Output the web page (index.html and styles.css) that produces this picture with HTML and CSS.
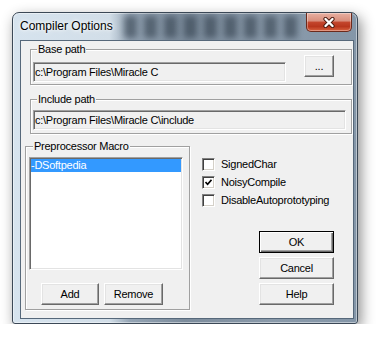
FILE: index.html
```html
<!DOCTYPE html>
<html lang="en">
<head>
  <meta charset="UTF-8" />
  <title>Compiler Options</title>
  <link rel="stylesheet" href="styles.css">
</head>
<body>
  <div class="window">
    <div class="titlebar">
      <div class="glass-blur"></div>
      <span class="title">Compiler Options</span>
      <button type="button" class="close">
        <svg width="12" height="11" viewBox="0 0 12 11">
          <path d="M2.5 2 L9.5 9 M9.5 2 L2.5 9" stroke="#4a1a10" stroke-width="4.2" stroke-linecap="round"/>
          <path d="M2.5 2 L9.5 9 M9.5 2 L2.5 9" stroke="#fff" stroke-width="2.4" stroke-linecap="round"/>
        </svg>
      </button>
    </div>

    <div class="client">
      <fieldset class="group group-base">
        <legend>Base path</legend>
        <div class="path-row">
          <input class="edit edit-base" type="text" value="c:\Program Files\Miracle C" readonly>
          <button type="button" class="btn btn-browse">...</button>
        </div>
      </fieldset>

      <fieldset class="group group-include">
        <legend>Include path</legend>
        <input class="edit edit-include" type="text" value="c:\Program Files\Miracle C\include" readonly>
      </fieldset>

      <div class="lower">
        <fieldset class="group group-macro">
          <legend>Preprocessor Macro</legend>
          <div class="listbox">
            <div class="list-item selected">-DSoftpedia</div>
          </div>
          <div class="macro-buttons">
            <button type="button" class="btn btn-add">Add</button>
            <button type="button" class="btn btn-remove">Remove</button>
          </div>
        </fieldset>

        <div class="side">
          <div class="checks">
            <label class="check"><span class="box"></span>SignedChar</label>
            <label class="check"><span class="box">
              <svg width="7" height="7" viewBox="0 0 7 7"><path d="M0.5 3 L2.6 5.3 L6.5 0.8" fill="none" stroke="#000" stroke-width="1.6"/></svg>
            </span>NoisyCompile</label>
            <label class="check"><span class="box"></span>DisableAutoprototyping</label>
          </div>
          <div class="dialog-buttons">
            <button type="button" class="btn btn-dialog btn-default">OK</button>
            <button type="button" class="btn btn-dialog">Cancel</button>
            <button type="button" class="btn btn-dialog">Help</button>
          </div>
        </div>
      </div>
    </div>
  </div>
</body>
</html>
```

FILE: styles.css
```css
body {
  margin: 0;
  background: #fff;
  font-family: "Liberation Sans", Arial, sans-serif;
}
.window {
  position: relative;
  box-sizing: border-box;
  width: 346px;
  height: 312px;
  margin: 12px 0 0 12px;
  padding: 0 3px 4px 7px;
  border: 1px solid #3b4856;
  border-radius: 7px 7px 3px 3px;
  overflow: hidden;
  background: linear-gradient(to right, #d6e3ee 0%, #d2dee8 28%, #94a4b4 34%, #7c8c9c 50%, #8a9aaa 75%, #8496a8 100%);
  box-shadow: inset 0 0 0 1px rgba(255,255,255,0.45), 3px 5px 14px rgba(0,0,0,0.45);
}
.titlebar {
  position: relative;
  display: flex;
  align-items: flex-start;
  height: 27px;
}
/* blurry reflection behind the glass */
.glass-blur {
  position: absolute;
  left: 104px;
  top: 3px;
  width: 176px;
  height: 22px;
  background: repeating-linear-gradient(90deg, #2a3744 0 13px, rgba(42,55,68,0) 13px 20px);
  opacity: 0.55;
  filter: blur(3px);
}
.title {
  position: relative;
  font-size: 12px;
  line-height: 27px;
  color: #000;
  text-shadow: 0 0 6px #fff, 0 0 3px #fff;
}
.close {
  position: relative;
  display: flex;
  align-items: center;
  justify-content: center;
  box-sizing: border-box;
  width: 46px;
  height: 19px;
  margin-left: auto;
  margin-right: 2px;
  padding: 0;
  border: 1px solid #6b2a1c;
  border-top: 0;
  border-radius: 0 0 5px 5px;
  background: linear-gradient(to bottom, #e8b0a2 0%, #d88d7b 45%, #c4472e 50%, #b8361d 75%, #d8623f 100%);
  box-shadow: inset 0 0 0 1px rgba(255,255,255,0.35);
}
.client {
  position: relative;
  box-sizing: border-box;
  height: 279px;
  border: 1px solid #56687a;
  background: #f0f0f0;
  font-size: 11px;
  letter-spacing: -0.25px;
  color: #000;
}
.group {
  box-sizing: border-box;
  min-width: 0;
  margin: 0;
  border: 1px solid #a0a0a0;
  box-shadow: inset 1px 1px 0 #fff, 1px 1px 0 #fff;
}
.group legend {
  margin-left: 4px;
  padding: 0 1px;
  line-height: 13px;
  background: #f0f0f0;
}
.group-base {
  width: 322px;
  margin: 2px 0 0 9px;
  padding: 0 2px 2px 2px;
}
.group-include {
  width: 322px;
  margin: 8px 0 0 9px;
  padding: 4px 2px 3px 2px;
}
.path-row {
  display: flex;
  align-items: flex-start;
  margin-top: -1px;
}
.edit {
  display: block;
  box-sizing: border-box;
  height: 20px;
  margin: 0;
  padding: 0 1px;
  font-family: inherit;
  font-size: 11px;
  letter-spacing: -0.25px;
  color: #000;
  background: #f0f0f0;
  border: 1px solid;
  border-color: #a0a0a0 #fff #fff #a0a0a0;
  box-shadow: inset 1px 1px 0 #696969, inset -1px -1px 0 #e3e3e3;
  outline: none;
}
.edit-base {
  width: 253px;
  margin-top: 7px;
}
.edit-include {
  width: 313px;
}
.btn {
  box-sizing: border-box;
  height: 22px;
  margin: 0;
  padding: 0;
  font-family: inherit;
  font-size: 11px;
  letter-spacing: -0.25px;
  color: #000;
  background: #f0f0f0;
  border: 1px solid;
  border-color: #fff #696969 #696969 #fff;
  box-shadow: inset -1px -1px 0 #a0a0a0, inset 1px 1px 0 #e3e3e3;
}
.btn-browse {
  width: 30px;
  margin-left: 18px;
}
.lower {
  display: flex;
  align-items: flex-start;
  margin: 6px 0 0 4px;
}
.group-macro {
  width: 165px;
  padding: 4px 3px 4px 3px;
}
.listbox {
  box-sizing: border-box;
  width: 154px;
  height: 113px;
  background: #fff;
  border: 1px solid;
  border-color: #a0a0a0 #fff #fff #a0a0a0;
  box-shadow: inset 1px 1px 0 #696969, inset -1px -1px 0 #e3e3e3;
  padding: 1px;
}
.list-item {
  height: 13px;
  line-height: 13px;
  white-space: nowrap;
}
.list-item.selected {
  background: #3399ff;
  color: #fff;
}
.macro-buttons {
  display: flex;
  gap: 5px;
  margin: 13px 0 0 12px;
}
.btn-add {
  width: 58px;
}
.btn-remove {
  width: 59px;
}
.side {
  display: flex;
  flex-direction: column;
  padding: 18px 0 0 12px;
}
.check {
  display: flex;
  align-items: flex-start;
  height: 18px;
  line-height: 13px;
  white-space: nowrap;
}
.box {
  display: flex;
  align-items: center;
  justify-content: center;
  box-sizing: border-box;
  width: 13px;
  height: 13px;
  margin-right: 6px;
  background: #fff;
  border: 1px solid;
  border-color: #808080 #fff #fff #808080;
  box-shadow: inset 1px 1px 0 #404040, inset -1px -1px 0 #d4d0c8;
}
.dialog-buttons {
  display: flex;
  flex-direction: column;
  gap: 4px;
  margin: 19px 0 0 57px;
}
.btn-dialog {
  width: 75px;
}
.btn-default {
  border: 1px solid #000;
  box-shadow: inset 1px 1px 0 #fff, inset -1px -1px 0 #696969, inset -2px -2px 0 #a0a0a0;
}
```
